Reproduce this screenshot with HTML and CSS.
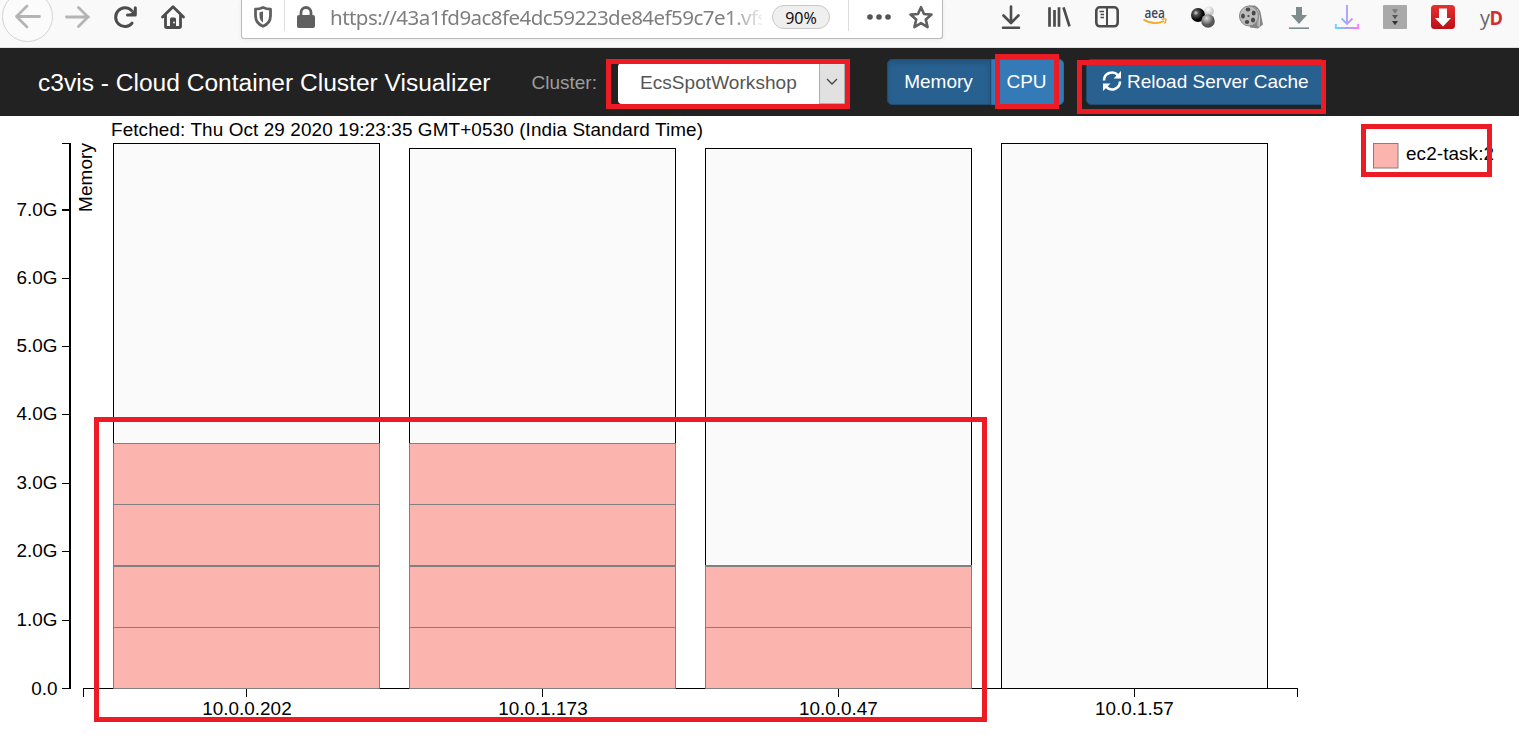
FILE: index.html
```html
<!DOCTYPE html>
<html lang="en">
<head>
<meta charset="utf-8">
<title>c3vis - Cloud Container Cluster Visualizer</title>
<link rel="stylesheet" href="styles.css">
</head>
<body>
<div class="browser-bar">
  <nav class="nav-buttons">
    <svg class="back" width="52" height="52" viewBox="0 0 52 52"><circle cx="26.500" cy="25.500" r="25" fill="#fbfbfb" stroke="#d3d3d3"/><path d="M38.500 25.500H15.500M26 15L15.500 25.500l10.500 10.500" fill="none" stroke="#b4b4b4" stroke-width="2.800" stroke-linecap="round" stroke-linejoin="round"/></svg>
    <svg class="icon" viewBox="0 0 24 24"><path d="M1.500 12h22M13.500 2.500L23 12l-9.500 9.500" fill="none" stroke="#b4b4b4" stroke-width="2.800" stroke-linecap="round" stroke-linejoin="round"/></svg>
    <svg class="icon" viewBox="0 0 24 24"><path d="M19 18.200A9.300 9.300 0 1 1 18.500 5.500" fill="none" stroke="#4c4c4c" stroke-width="3" stroke-linecap="round"/><path d="M22.300 2.800V10H14.500" fill="none" stroke="#4c4c4c" stroke-width="3" stroke-linecap="round" stroke-linejoin="round"/><path d="M22 4v6h-6z" fill="#4c4c4c"/></svg>
    <svg class="icon" viewBox="0 0 24 24"><path d="M1.500 12L12 1.700 22.500 12M4.500 10v11.200q0 1.300 1.300 1.300h12.400q1.300 0 1.300-1.300V10" fill="none" stroke="#4c4c4c" stroke-width="2.800" stroke-linecap="round" stroke-linejoin="round"/><path d="M9 21v-7q0-1.500 1.500-1.500h3q1.500 0 1.500 1.500v7z" fill="#4c4c4c"/><circle cx="13" cy="17.500" r=".9" fill="#f9f9fa"/></svg>
  </nav>
  <div class="url-bar">
    <svg class="shield" width="20" height="22" viewBox="0 0 20 22"><path d="M10 1.500q3.500 1.600 7.500 1.700v6.300c0 5-3 9-7.500 10.800C5.500 18.500 2.500 14.500 2.500 9.500V3.200Q6.500 3.100 10 1.500z" fill="none" stroke="#606060" stroke-width="2.800" stroke-linejoin="round"/><path d="M10 5.500v11q-3.500-2-3.500-7V6.200z" fill="#606060"/></svg>
    <span class="divider"></span>
    <svg class="lock" width="18" height="22" viewBox="0 0 18 22"><path d="M4 10V6.500a5 5 0 0 1 10 0V10" fill="none" stroke="#606060" stroke-width="2.800"/><rect x="0" y="9" width="18" height="13" rx="2" fill="#606060"/></svg>
    <span class="url">https://43a1fd9ac8fe4dc59223de84ef59c7e1.vfs</span>
    <span class="zoom-level">90%</span>
    <span class="divider"></span>
    <svg class="dots" width="24" height="6" viewBox="0 0 24 6"><g fill="#555"><circle cx="3" cy="3" r="2.800"/><circle cx="12" cy="3" r="2.800"/><circle cx="21" cy="3" r="2.800"/></g></svg>
    <svg class="icon" viewBox="0 0 24 24"><path d="M12 2.200l3 6.800 7.500.6-5.700 5 1.800 7.500-6.600-4-6.600 4 1.800-7.500-5.700-5 7.500-.6z" fill="none" stroke="#606060" stroke-width="2.600" stroke-linejoin="round"/></svg>
  </div>
  <div class="extensions">
    <svg class="icon" viewBox="0 0 24 24"><path d="M12 1.500v16M4.500 10.500L12 18l7.500-7.500M4 22.700h16" fill="none" stroke="#4c4c4c" stroke-width="2.600" stroke-linecap="round" stroke-linejoin="round"/></svg>
    <svg class="icon" viewBox="0 0 24 24"><path d="M2.500 2.300v19.400M7.500 5v16.700M12 2.300v19.400M16.500 2.300l6 19" fill="none" stroke="#4c4c4c" stroke-width="2.700"/></svg>
    <svg class="icon" viewBox="0 0 24 24"><rect x="1.300" y="2.300" width="21.400" height="19" rx="3.500" fill="none" stroke="#4c4c4c" stroke-width="2.600"/><path d="M12 3v17" stroke="#4c4c4c" stroke-width="2"/><path d="M4.500 6.500H9M5.500 9.500H9M5.500 12.500H9" stroke="#4c4c4c" stroke-width="1.400"/></svg>
    <svg class="icon" viewBox="0 0 24 24"><text class="aea" x="11.700" y="12.500" text-anchor="middle" textLength="20.500" lengthAdjust="spacingAndGlyphs">aea</text><path d="M.5 14.500q10.500 6.500 20.500 1.500" fill="none" stroke="#f5a623" stroke-width="1.800"/><path d="M18.500 14.200q5-.8 4.500.3 0 2-1.700 4" fill="none" stroke="#f5a623" stroke-width="1.400"/></svg>
    <svg class="icon" viewBox="0 0 24 24"><defs><radialGradient id="dark" cx=".35" cy=".35"><stop stop-color="#ddd"/><stop offset=".35" stop-color="#555"/><stop offset="1" stop-color="#050505"/></radialGradient><radialGradient id="light" cx=".4" cy=".3"><stop stop-color="#fff"/><stop offset="1" stop-color="#ccc"/></radialGradient><radialGradient id="mid" cx=".4" cy=".3"><stop stop-color="#ddd"/><stop offset="1" stop-color="#555"/></radialGradient></defs><circle cx="18" cy="6.500" r="5" fill="url(#light)"/><circle cx="7" cy="10" r="7" fill="url(#dark)"/><circle cx="17" cy="16" r="6.800" fill="url(#mid)"/></svg>
    <svg class="icon" viewBox="0 0 24 24"><path d="M10 .5h6q6 3 6.500 12l1.500 7-5 4-8-1z" fill="#858585"/><path d="M18 4q4 7 2 18M15 2q5 5 4 19" fill="none" stroke="#ddd" stroke-width=".8"/><ellipse cx="10" cy="11" rx="9.500" ry="10" fill="#bbb" stroke="#888"/><g fill="#484848"><ellipse cx="9" cy="4.500" rx="2.300" ry="1.900"/><ellipse cx="14.700" cy="8" rx="2" ry="2.500"/><ellipse cx="14" cy="15" rx="2.100" ry="2.500"/><ellipse cx="8" cy="17" rx="2.200" ry="2"/><ellipse cx="4" cy="11" rx="1.900" ry="2.500"/><circle cx="9.500" cy="11" r="1.100"/></g></svg>
    <svg class="icon" viewBox="0 0 24 24"><path d="M9 2h6v8h5l-8 9-8-9h5z" fill="#7d8c8c"/><path d="M2 23.200h20" stroke="#7d8c8c" stroke-width="1.600"/></svg>
    <svg class="icon" viewBox="0 0 24 24"><defs><linearGradient id="tray" x1="0" x2="24" y1="0" y2="0" gradientUnits="userSpaceOnUse"><stop stop-color="#66d8ff"/><stop offset=".5" stop-color="#aea0ff"/><stop offset="1" stop-color="#f67cff"/></linearGradient></defs><path d="M12 0v18M6.500 13.500l5.500 5.500 5.500-5.500M.8 19v4h22.400v-4" fill="none" stroke="url(#tray)" stroke-width="1.900"/></svg>
    <svg class="icon" viewBox="0 0 24 24"><rect width="24" height="24" rx="1" fill="#a9a9a9"/><path d="M9 4.200h6L12 8.500z" fill="#777"/><path d="M9 10h6l-3 4.300z" fill="#555"/><path d="M9 16h6l-3 4.300z" fill="#333"/></svg>
    <svg class="icon" viewBox="0 0 24 24"><defs><linearGradient id="red" x2="0" y2="1"><stop stop-color="#e73030"/><stop offset="1" stop-color="#ba1018"/></linearGradient></defs><rect width="24" height="24" rx="3.500" fill="url(#red)"/><path d="M8 3.500h8V13h4l-8 8.500L4 13h4z" fill="#fff"/></svg>
    <svg class="icon" viewBox="0 0 24 24"><text class="yd" x="1" y="20" fill="#666" textLength="10" lengthAdjust="spacingAndGlyphs">y</text><text class="yd yd-bold" x="10.500" y="20" fill="#d32f2f" textLength="13.500" lengthAdjust="spacingAndGlyphs">D</text></svg>
  </div>
</div>

<header class="app-bar">
  <h1 class="title">c3vis - Cloud Container Cluster Visualizer</h1>
  <span class="cluster-label">Cluster:</span>
  <div class="cluster-select"><span class="select-value">EcsSpotWorkshop</span><span class="select-arrow"><svg width="12" height="8" viewBox="0 0 12 8"><path d="M1 1l5 5 5-5" fill="none" stroke="#444" stroke-width="1.300"/></svg></span></div>
  <div class="toggle"><button class="btn btn-active">Memory</button><button class="btn btn-cpu">CPU</button></div>
  <button class="btn btn-reload"><svg width="20" height="20" viewBox="0 0 20 20"><path d="M2 9.500A8 8 0 0 1 16 4.300M18 10.500A8 8 0 0 1 4 15.700" fill="none" stroke="#fff" stroke-width="2.600"/><path d="M19 0v7.500h-7.500zM1 20v-7.500h7.500z" fill="#fff"/></svg><span>Reload Server Cache</span></button>
</header>

<main class="chart">
<svg width="1519" height="620" viewBox="0 116 1519 620">
  <text x="111" y="136" textLength="592">Fetched: Thu Oct 29 2020 19:23:35 GMT+0530 (India Standard Time)</text>
  <g class="axis">
    <path d="M62 143.500h8M62 278.500h8M62 346.500h8M62 414.500h8M62 483.500h8M62 551.500h8M62 620.500h8M62 688.500h8"/>
    <path class="thick" d="M70 143v546M62 210h8"/>
    <path d="M83.500 697v-8.500H1297.500V697M246.500 689v8M542.500 689v8M838.500 689v8M1134.500 689v8"/>
  </g>
  <g text-anchor="end">
    <text x="57.500" y="216">7.0G</text><text x="57.500" y="284">6.0G</text><text x="57.500" y="352">5.0G</text><text x="57.500" y="420">4.0G</text><text x="57.500" y="489">3.0G</text><text x="57.500" y="557">2.0G</text><text x="57.500" y="626">1.0G</text><text x="57.500" y="695">0.0</text>
  </g>
  <text transform="translate(92 143) rotate(-90)" text-anchor="end" textLength="69">Memory</text>
  <g class="capacity">
    <rect x="113.500" y="143.500" width="266" height="545"/>
    <rect x="409.500" y="148.500" width="266" height="540"/>
    <rect x="705.500" y="148.500" width="266" height="540"/>
    <rect x="1001.500" y="143.500" width="266" height="545"/>
  </g>
  <g class="task">
    <path d="M113.500 443.500h266v245h-266zM113.500 504.500h266M113.500 627.500h266"/>
    <path d="M409.500 443.500h266v245h-266zM409.500 504.500h266M409.500 627.500h266"/>
    <path d="M705.500 565.500h266v123h-266zM705.500 627.500h266"/>
    <path class="thick" d="M113 566h267M409 566h267M705 566h267"/>
    <rect x="1373.500" y="143.500" width="24.500" height="24.500"/>
  </g>
  <g text-anchor="middle">
    <text x="247" y="715">10.0.0.202</text><text x="543" y="715">10.0.1.173</text><text x="838.500" y="715">10.0.0.47</text><text x="1134.500" y="715">10.0.1.57</text>
  </g>
  <text x="1406" y="160" textLength="88">ec2-task:2</text>
</svg>
</main>

<div class="mark mark-select"></div>
<div class="mark mark-cpu"></div>
<div class="mark mark-reload"></div>
<div class="mark mark-legend"></div>
<div class="mark mark-tasks"></div>
</body>
</html>
```
FILE: styles.css
```css
* { box-sizing: border-box; }
body { margin: 0; width: 1519px; height: 736px; overflow: hidden; background: #fff; font-family: "Liberation Sans", Arial, sans-serif; font-size: 19px; position: relative; }
svg { display: block; flex: none; }
.icon { width: 24px; height: 24px; overflow: visible; }

.browser-bar { height: 48px; background: #f9f9fa; border-bottom: 1px solid #dfe3df; display: flex; align-items: flex-start; overflow: hidden; }
.nav-buttons { display: flex; align-items: center; height: 34px; width: 241px; padding-left: 1px; gap: 24px; }
.nav-buttons .back { margin-right: -12px; }
.url-bar { display: flex; align-items: center; width: 702px; height: 39px; padding: 0 9px 5px 11px; background: #fff; border: 1px solid #b9b9ba; border-top: 0; border-radius: 0 0 3px 3px; box-shadow: 0 1px 5px rgba(0,0,0,.06); }
.divider { width: 1px; height: 32px; background: #ddd; margin-top: -3px; }
.shield { margin-right: 11px; }
.lock { margin-left: 12px; margin-right: 15px; }
.url { width: 432px; padding-top: 1px; white-space: nowrap; color: #7e7e7e; font: 20.5px/29px "Noto Sans", "Open Sans", sans-serif; letter-spacing: -0.54px; -webkit-mask-image: linear-gradient(to right, #000 92%, transparent 101%); mask-image: linear-gradient(to right, #000 92%, transparent 101%); }
.zoom-level { width: 58px; height: 24px; margin: 0 18px 0 10px; border: 1px solid #c8c8c8; border-radius: 12px; background: #efefef; color: #111; text-align: center; font: 16px/24px "Noto Sans", "Open Sans", sans-serif; }
.dots { margin: 0 18px; }
.url-bar .dots + .icon { margin-left: 0; }
.extensions { display: flex; gap: 24px; padding: 5px 0 0 56px; }
.aea { font: 600 14.5px "Open Sans", sans-serif; fill: #37475a; }
.yd { font: 20px "Open Sans", sans-serif; }
.yd-bold { font-weight: bold; }

.app-bar { display: flex; align-items: flex-start; height: 68px; padding: 11px 0 0 38px; background: #222; }
.title { width: 493.5px; margin: 0; font-size: 24.55px; line-height: 48px; font-weight: normal; color: #fff; white-space: nowrap; }
.cluster-label { width: 86.5px; line-height: 48px; color: #9d9d9d; }
.cluster-select { display: flex; width: 228px; height: 41px; margin-top: 4px; background: #fff; border-radius: 4px; overflow: hidden; }
.select-value { width: 201px; padding-left: 22px; line-height: 40px; letter-spacing: .06px; color: #555; }
.select-arrow { display: flex; align-items: center; justify-content: center; width: 26px; background: #e1e1e1; border: 1px solid #adadad; padding-bottom: 3px; }
.toggle { display: flex; margin-left: 41px; }
.btn { height: 46px; padding: 0 0 1px; border: 1px solid #204d74; color: #fff; font: 19px "Liberation Sans", Arial, sans-serif; background: #286090; }
.btn-active { width: 104px; padding-right: 1px; border-radius: 5px 0 0 5px; box-shadow: inset 0 3px 5px rgba(0,0,0,.13); }
.btn-cpu { width: 73px; padding-right: 2px; border-color: #2e6da4; border-radius: 0 5px 5px 0; background: #337ab7; }
.btn-reload { display: flex; align-items: center; gap: 5px; width: 239px; margin-left: 22px; padding-left: 15px; border-radius: 5px; white-space: nowrap; }
.btn-reload svg { margin-top: -2px; }

.chart text { font-size: 18.9px; fill: #000; }
.axis path { fill: none; stroke: #000; shape-rendering: crispEdges; }
.axis .thick { stroke-width: 2; }
.capacity rect { fill: #fafafa; stroke: #000; }
.task path, .task rect { fill: #fbb4ae; stroke: #808080; }
.task .thick { stroke-width: 2; }

.mark { position: absolute; border: 5px solid #ed1c24; }
.mark-select { left: 606px; top: 59px; width: 244px; height: 50px; }
.mark-cpu { left: 995px; top: 54px; width: 64px; height: 55px; }
.mark-reload { left: 1077px; top: 60px; width: 249px; height: 54px; }
.mark-legend { left: 1361px; top: 124px; width: 131px; height: 53px; }
.mark-tasks { left: 94px; top: 417px; width: 893px; height: 305px; }
```
